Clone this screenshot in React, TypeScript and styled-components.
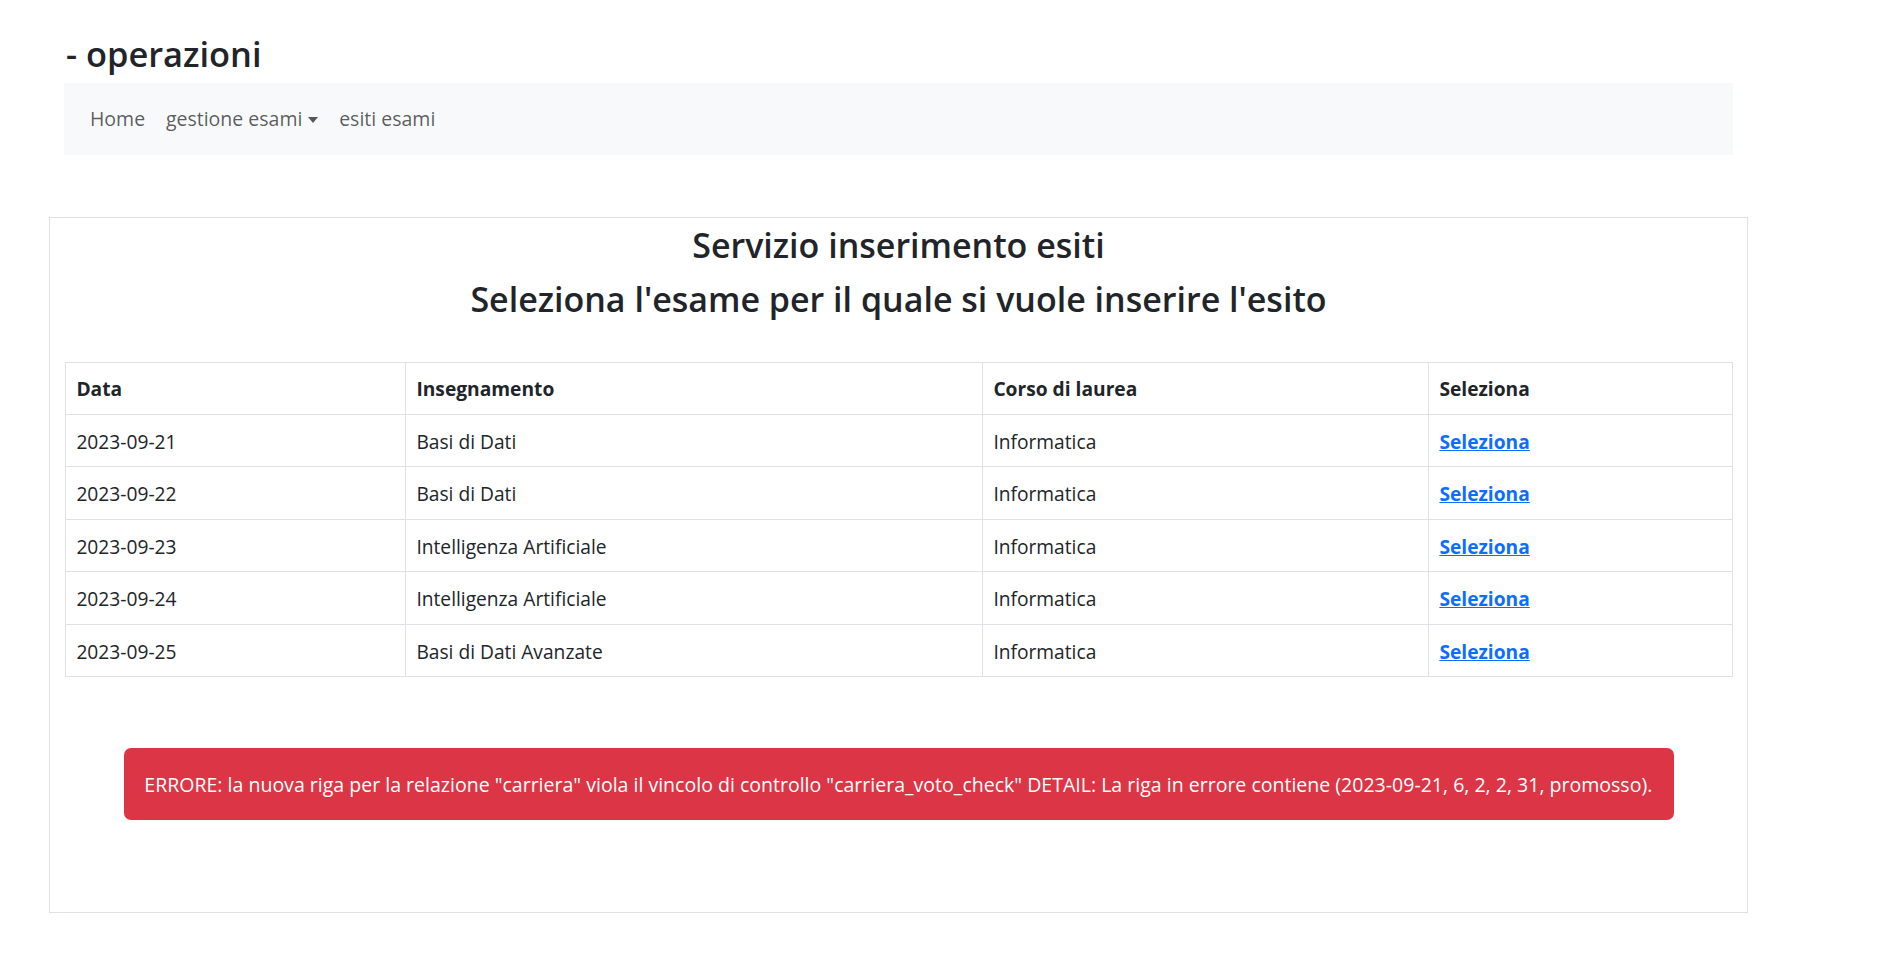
import React from "react";
import styled, { createGlobalStyle } from "styled-components";

const GlobalStyle = createGlobalStyle`
  html, body {
    margin: 0;
    padding: 0;
    background: #ffffff;
  }
  body {
    font-family: "Open Sans", "Noto Sans", "Liberation Sans", sans-serif;
    color: #212529;
    -webkit-font-smoothing: antialiased;
  }
  * { box-sizing: border-box; }
`;

const Page = styled.div`
  width: 1699px;
  margin-left: 49px;
  padding-bottom: 62px;
`;

const Header = styled.header`
  margin: 0 15px;
  padding-top: 31.5px;
`;

const Title = styled.h2`
  margin: 0 0 7.5px;
  padding-left: 2px;
  font-size: 34.4px;
  line-height: 43.7px;
  font-weight: 600;
  color: #212529;
`;

const Navbar = styled.nav`
  height: 72px;
  background: #f8f9fa;
  display: flex;
  align-items: center;
  padding: 0 15.6px;
`;

const NavList = styled.ul`
  display: flex;
  list-style: none;
  margin: 0;
  padding: 0;
`;

const NavLink = styled.a<{ $dropdown?: boolean }>`
  display: inline-flex;
  align-items: center;
  padding: 0 10.4px;
  font-size: 19.5px;
  line-height: 31.2px;
  color: rgba(0, 0, 0, 0.65);
  text-decoration: none;
  cursor: pointer;

  ${(p) =>
    p.$dropdown &&
    `
    &::after {
      content: "";
      display: inline-block;
      margin-left: 6px;
      margin-top: 2px;
      border-top: 6.5px solid currentColor;
      border-left: 5.5px solid transparent;
      border-right: 5.5px solid transparent;
    }
  `}
`;

const Card = styled.section`
  margin-top: 62px;
  border: 1px solid #dee2e6;
  padding: 6px 15px 0;
`;

const Heading = styled.h3`
  margin: 0 0 10.4px;
  font-size: 34px;
  line-height: 43.7px;
  font-weight: 600;
  text-align: center;
  color: #212529;
`;

const Table = styled.table`
  width: 100%;
  margin-top: 40px;
  border-collapse: collapse;
  table-layout: fixed;
  font-size: 19.2px;
`;

const Cell = styled.td`
  border: 1px solid #dee2e6;
  padding: 11.6px 10.4px 9.2px;
  line-height: 30.7px;
  text-align: left;
  vertical-align: top;
  color: #212529;
`;

const HeadCell = styled(Cell).attrs({ as: "th" })`
  font-weight: 700;
`;

const SelectLink = styled.a`
  color: #0d6efd;
  font-weight: 700;
  text-decoration: underline;
  cursor: pointer;
`;

const Alert = styled.div`
  margin: 71px 58.5px 92px;
  padding: 20.4px 20.8px;
  background: #dc3545;
  color: #ffffff;
  border-radius: 7px;
  font-size: 19.55px;
  line-height: 31.2px;
`;

const exams = [
  { date: "2023-09-21", subject: "Basi di Dati", course: "Informatica" },
  { date: "2023-09-22", subject: "Basi di Dati", course: "Informatica" },
  { date: "2023-09-23", subject: "Intelligenza Artificiale", course: "Informatica" },
  { date: "2023-09-24", subject: "Intelligenza Artificiale", course: "Informatica" },
  { date: "2023-09-25", subject: "Basi di Dati Avanzate", course: "Informatica" },
];

export default function App() {
  return (
    <>
      <GlobalStyle />
      <Page>
        <Header>
          <Title>- operazioni</Title>
          <Navbar>
            <NavList>
              <li><NavLink>Home</NavLink></li>
              <li><NavLink $dropdown>gestione esami</NavLink></li>
              <li><NavLink>esiti esami</NavLink></li>
            </NavList>
          </Navbar>
        </Header>
        <Card>
          <Heading>Servizio inserimento esiti</Heading>
          <Heading>Seleziona l'esame per il quale si vuole inserire l'esito</Heading>
          <Table>
            <colgroup>
              <col style={{ width: 340 }} />
              <col style={{ width: 577 }} />
              <col style={{ width: 446 }} />
              <col style={{ width: 304 }} />
            </colgroup>
            <thead>
              <tr>
                <HeadCell>Data</HeadCell>
                <HeadCell>Insegnamento</HeadCell>
                <HeadCell>Corso di laurea</HeadCell>
                <HeadCell>Seleziona</HeadCell>
              </tr>
            </thead>
            <tbody>
              {exams.map((e) => (
                <tr key={e.date}>
                  <Cell>{e.date}</Cell>
                  <Cell>{e.subject}</Cell>
                  <Cell>{e.course}</Cell>
                  <Cell>
                    <SelectLink>Seleziona</SelectLink>
                  </Cell>
                </tr>
              ))}
            </tbody>
          </Table>
          <Alert>
            ERRORE: la nuova riga per la relazione "carriera" viola il vincolo di controllo "carriera_voto_check" DETAIL: La riga in errore contiene (2023-09-21, 6, 2, 2, 31, promosso).
          </Alert>
        </Card>
      </Page>
    </>
  );
}
